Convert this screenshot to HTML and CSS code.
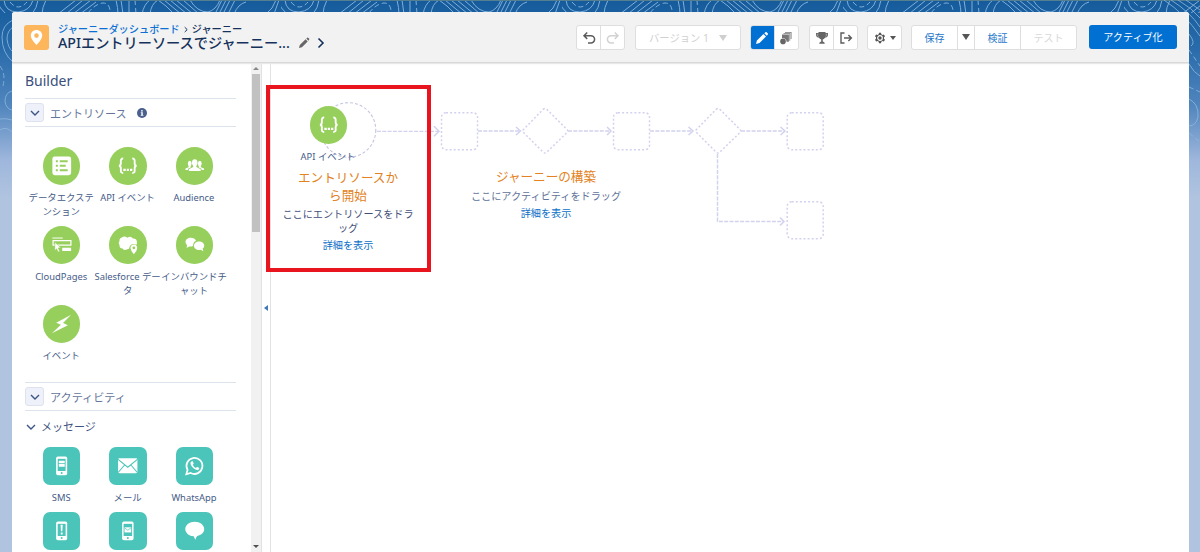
FILE: index.html
```
<!DOCTYPE html>
<html lang="ja">
<head>
<meta charset="utf-8">
<title>Journey Builder</title>
<link rel="stylesheet" href="styles.css">
</head>
<body>
<svg class="backdrop" width="1200" height="552" aria-hidden="true">
  <defs>
    <linearGradient id="sky" x1="0" y1="0" x2="0" y2="1">
      <stop offset="0" stop-color="#155b9b"/><stop offset=".09" stop-color="#2a6cab"/><stop offset=".19" stop-color="#5085bd"/><stop offset=".29" stop-color="#9eb7dc"/><stop offset=".36" stop-color="#b0c4df"/><stop offset="1" stop-color="#b0c4df"/>
    </linearGradient>
    <pattern id="topo" width="281" height="200" patternUnits="userSpaceOnUse">
      <g fill="none" stroke="#7fadd8" stroke-width="1">
        <path d="M4 0Q5 12 18 12Q30 11 33 0"/>
        <path d="M10 2Q18 12 27 2" stroke-dasharray="5 3"/>
        <path d="M-4 0Q0 9 6 14M38 0Q37 8 32 14M46 0Q42 8 42 14M58 14L76 0M66 14L83 0M73 14L91 0M80 14L96 2M116 0Q118 8 118 14M121 0L123 14M129 0L129 14M142 14Q144 4 150 0M150 14Q151 4 158 0M158 0Q166 5 174 14M164 0L181 14M170 0L187 14M176 0L193 14M183 0L199 14M190 0Q197 12 208 12Q216 10 220 0M215 14L222 0M219 14L226 0M223 14L230 0M228 14L235 0M234 14Q238 4 246 2M266 14Q273 9 276 0M274 14L279 0"/>
        <path d="M88 13Q95 4 103 3Q109 3 110 10M135 0L136 14M242 0L270 0" stroke-dasharray="5 3"/>
      </g>
    </pattern>
  </defs>
  <rect width="1200" height="552" fill="url(#sky)"/>
  <rect width="1200" height="13" fill="url(#topo)"/>
  <rect width="1200" height="1" fill="#537f91"/>
  <g fill="none" stroke="#8fb9df" stroke-width="1" opacity=".8">
    <path d="M13 20Q2 25 2 37Q2 53 13 62M13 27Q7 31 7 39Q8 48 13 52M12 91Q5 93 5 101Q6 109 12 110M0 119Q6 118 12 120M0 130Q6 126 12 132"/>
    <path d="M0 66Q6 74 3 86" stroke-dasharray="5 3"/>
    <path d="M1164 0Q1185 14 1200 36M1171 0Q1190 12 1200 27M1178 0Q1192 8 1200 18M1186 0L1200 10M1189 34Q1196 43 1191 46M1189 64Q1194 73 1200 76M1189 99Q1199 104 1198 117Q1196 126 1189 126"/>
    <path d="M1189 50L1200 66M1189 87L1200 92M1189 133L1200 142" stroke-dasharray="5 3"/>
  </g>
</svg>

<div class="app">
  <header class="topbar">
    <span class="app-icon"><svg width="25" height="25" viewBox="0 0 25 25"><path fill="#fff" fill-rule="evenodd" d="M12.5 5C9.2 5 6.8 7.4 6.8 10.5C6.8 14.5 12.5 20 12.5 20S18.2 14.5 18.2 10.5C18.2 7.4 15.8 5 12.5 5ZM12.5 8.3A2.3 2.3 0 1 1 12.5 12.9A2.3 2.3 0 1 1 12.5 8.3Z"/></svg></span>
    <div class="heading">
      <div class="crumbs"><a>ジャーニーダッシュボード</a><svg width="12" height="10" viewBox="0 0 12 10"><path d="M4.7 3.2L7.2 5.6L4.7 8" fill="none" stroke="#16325c" stroke-width="1"/></svg><span>ジャーニー</span></div>
      <div class="title-row">
        <h1>APIエントリーソースでジャーニー...</h1>
        <svg class="pencil" width="12" height="12" viewBox="0 0 12 12"><path fill="#666" d="M1 11L1.8 8.1L7.6 2.3L9.7 4.4L3.9 10.2ZM8.3 1.6L9.2 .7Q9.8 .3 10.4 .9L11.1 1.6Q11.6 2.2 11.1 2.8L10.4 3.7Z"/></svg>
        <svg class="next" width="8" height="12" viewBox="0 0 8 12"><path d="M1.5 1.5L6 6L1.5 10.5" fill="none" stroke="#16325c" stroke-width="1.6"/></svg>
      </div>
    </div>
    <div class="tools">
      <div class="group undo">
        <button><svg width="14" height="14" viewBox="0 0 14 14"><path d="M5.2 1.5L2 4.7L5.2 7.9M2.2 4.7H8.3A3.7 3.7 0 1 1 8.3 12H6" fill="none" stroke="#5c5c5c" stroke-width="1.5"/></svg></button>
        <button><svg width="14" height="14" viewBox="0 0 14 14"><path d="M8.8 1.5L12 4.7L8.8 7.9M11.8 4.7H5.7A3.7 3.7 0 1 0 5.7 12H8" fill="none" stroke="#d2d2d2" stroke-width="1.5"/></svg></button>
      </div>
      <div class="group version"><button><span>バージョン 1</span><i class="caret pale"></i></button></div>
      <div class="group modes">
        <button class="on"><svg width="14" height="14" viewBox="0 0 14 14"><path fill="#fff" d="M1 13L1.9 9.5L8.5 3L11 5.5L4.5 12.1ZM9.3 2.2L10.4 1.2Q11 .7 11.7 1.3L12.7 2.3Q13.3 3 12.8 3.6L11.8 4.7Z"/></svg></button>
        <button><svg width="14" height="14" viewBox="0 0 14 14"><path fill="#777" d="M6 1H12.5V8H11.7V1.8H6ZM4.5 2.3H11.2V9.7H10.4V3.1H4.5ZM3 3.6H9.9V10.8H7.6Q7.4 7.2 3 7Z"/><circle cx="4" cy="10.4" r="2.8" fill="#666"/></svg></button>
      </div>
      <div class="group extra">
        <button><svg width="14" height="14" viewBox="0 0 14 14"><path fill="#666" d="M3.5 1H10.5V2H13V4.2Q12.8 6.6 10 6.8Q9.3 8 7.8 8.4V10.5Q9.8 11 9.8 12.8H4.2Q4.2 11 6.2 10.5V8.4Q4.7 8 4 6.8Q1.2 6.6 1 4.2V2H3.5Z"/><path d="M3.4 3.2H2.2Q2.1 5 3.7 5.5M10.6 3.2H11.8Q11.9 5 10.3 5.5" fill="none" stroke="#bbb" stroke-width=".7"/></svg></button>
        <button><svg width="14" height="14" viewBox="0 0 14 14"><path d="M5.5 2H2V12H5.5M5 7H12.3M9.4 4L12.4 7L9.4 10" fill="none" stroke="#5c5c5c" stroke-width="1.4"/></svg></button>
      </div>
      <div class="group gear"><button><svg width="12" height="12" viewBox="0 0 12 12"><path fill="#555" d="M5 .8H7L7.3 2.2L8.5 2.9L9.9 2.4L11 4.2L10 5.2V6.8L11 7.8L9.9 9.6L8.5 9.1L7.3 9.8L7 11.2H5L4.7 9.8L3.5 9.1L2.1 9.6L1 7.8L2 6.8V5.2L1 4.2L2.1 2.4L3.5 2.9L4.7 2.2Z"/><circle cx="6" cy="6" r="2.3" fill="none" stroke="#fff" stroke-width="1.2"/></svg><i class="caret small"></i></button></div>
      <div class="group save"><button>保存</button><button><i class="caret"></i></button><button>検証</button><button class="off">テスト</button></div>
      <button class="activate">アクティブ化</button>
    </div>
  </header>

  <main class="body">
    <aside class="sidebar">
      <h2>Builder</h2>
      <div class="section">
        <span class="toggle"><svg width="10" height="6" viewBox="0 0 10 6"><path d="M1 1L5 5L9 1" fill="none" stroke="#3d5584" stroke-width="1.4"/></svg></span>
        <span>エントリソース</span>
        <svg class="info" width="10" height="10" viewBox="0 0 10 10"><circle cx="5" cy="5" r="5" fill="#4a618d"/><path d="M4 2.2H5.8V3.4H4ZM3.8 4.2H5.8V7H6.4V7.8H3.7V7H4.3V5H3.8Z" fill="#fff"/></svg>
      </div>
      <div class="grid sources">
        <div class="item"><span class="tile round"><svg viewBox="0 0 38 38"><rect x="9.5" y="9.5" width="19" height="19" rx="2.5" fill="#fff"/><path d="M13 14.5H15M13 19H15M13 23.5H15M17 14.5H25M17 19H23M17 23.5H25" stroke="#97cf5d" stroke-width="2"/></svg></span><p>データエクステ<br>ンション</p></div>
        <div class="item"><span class="tile round"><svg viewBox="0 0 38 38"><path d="M14.4 11.7Q12 11.6 12 14V16.5Q12 19 10 19Q12 19 12 21.5V24Q12 26.4 14.4 26.3M23.6 11.7Q26 11.6 26 14V16.5Q26 19 28 19Q26 19 26 21.5V24Q26 26.4 23.6 26.3" fill="none" stroke="#fff" stroke-width="1.9"/><path d="M14.5 22.1H17V24.3H14.5ZM18 22.1H20.3V24.3H18ZM21.3 22.1H23.6V24.3H21.3Z" fill="#fff"/></svg></span><p>API イベント</p></div>
        <div class="item"><span class="tile round"><svg viewBox="0 0 38 38"><g fill="#fff"><ellipse cx="19" cy="16" rx="2.8" ry="3.5"/><ellipse cx="13.9" cy="16.7" rx="1.9" ry="2.7"/><ellipse cx="24.1" cy="16.7" rx="1.9" ry="2.7"/><path d="M17.4 18H20.6V20.3L25 22.5V24.2H13V22.5L17.4 20.3ZM12.8 18.5H14.9V20.8L12.2 22V23.3H9.6V21.9L12.8 20.5ZM23.1 18.5H25.2V20.5L28.4 21.9V23.3H25.8V22L23.1 20.8Z"/></g></svg></span><p>Audience</p></div>
        <div class="item"><span class="tile round"><svg viewBox="0 0 38 38"><path d="M9.5 12.2H20" stroke="#fff"/><path d="M10.2 14.8H28.3V19.4H10.2Z" fill="none" stroke="#fff" stroke-width="1.2"/><path d="M19.5 22H28.5V25.3H19.5Z" fill="#fff"/><path d="M12 16.5L18 22L15.3 22.2L17 25.5L15.3 26.3L13.8 23.1L12 24.8Z" fill="#fff" stroke="#97cf5d" stroke-width=".5"/></svg></span><p>CloudPages</p></div>
        <div class="item"><span class="tile round"><svg viewBox="0 0 38 38"><path d="M13 11.6Q16 9.5 18.5 12Q22 9.6 24.3 12.7Q28.6 12.7 28.3 17Q28.4 18.2 27.8 19Q22.5 16.8 20.8 21.3Q20.8 23.8 18.5 23.6Q15.5 25.5 13.7 22.8Q10.3 22.6 10.7 19.5Q8.8 17.4 10.6 15.2Q10.4 12.3 13 11.6Z" fill="#fff"/><path fill="#fff" fill-rule="evenodd" d="M25.2 18.8Q21.9 18.9 21.8 22.3Q22 25.3 25.2 28.7Q28.4 25.3 28.6 22.3Q28.5 18.9 25.2 18.8ZM25.2 20.7A1.4 1.4 0 1 1 25.2 23.5A1.4 1.4 0 1 1 25.2 20.7Z"/></svg></span><p>Salesforce デー<br>タ</p></div>
        <div class="item"><span class="tile round"><svg viewBox="0 0 38 38"><path fill="#fff" d="M15 11.8C12 11.8 9.6 13.5 9.6 16.3Q9.7 18.4 11.3 19.6L10.7 22.2L13.3 20.7Q15.5 21.1 17.3 20.2Q17.2 16.3 20.3 14.9C19.5 12.9 17.6 11.8 15 11.8ZM23.4 15.7C20.3 15.7 18.2 17.7 18.2 20.1C18.2 23.5 21.8 25 25.1 24.1L27.7 25.6L27 22.9Q28.6 21.8 28.6 19.9C28.5 17.2 26 15.7 23.4 15.7Z"/></svg></span><p>インバウンドチ<br>ャット</p></div>
        <div class="item"><span class="tile round"><svg viewBox="0 0 38 38"><path fill="#fff" d="M28.5 10L13.4 18L18.2 20L9 28.7L25.3 20.4L20.3 18.2Z"/></svg></span><p>イベント</p></div>
      </div>
      <div class="section second">
        <span class="toggle"><svg width="10" height="6" viewBox="0 0 10 6"><path d="M1 1L5 5L9 1" fill="none" stroke="#3d5584" stroke-width="1.4"/></svg></span>
        <span>アクティビティ</span>
      </div>
      <div class="sub"><svg width="10" height="6" viewBox="0 0 10 6"><path d="M1 1L5 5L9 1" fill="none" stroke="#3d5584" stroke-width="1.4"/></svg><span>メッセージ</span></div>
      <div class="grid messages">
        <div class="item"><span class="tile"><svg viewBox="0 0 38 38"><rect x="13.3" y="9.6" width="11.2" height="19" rx="1.8" fill="#fff"/><path d="M14.9 12H22.9V24.3H14.9Z" fill="#4bc4b9"/><path d="M16 14H22V16.4H16ZM16 17.3H22V20H16Z" fill="#fff"/><circle cx="18.9" cy="26.4" r="1" fill="#4bc4b9"/></svg></span><p>SMS</p></div>
        <div class="item"><span class="tile"><svg viewBox="0 0 38 38"><rect x="9.2" y="11.5" width="19.6" height="15" rx="1.5" fill="#fff"/><path d="M9.2 12.5L19 20.5L28.8 12.5M9.5 25.6L16 18M28.5 25.6L22 18" fill="none" stroke="#4bc4b9" stroke-width="1.1"/></svg></span><p>メール</p></div>
        <div class="item"><span class="tile"><svg viewBox="0 0 38 38"><path d="M10.5 27.6L11.7 23.3A8.1 8.1 0 1 1 14.8 26.3Z" fill="none" stroke="#fff" stroke-width="1.8"/><path d="M16 14.5Q14.4 15.3 14.7 17.3Q16.6 22.5 21.7 23.5Q23.5 23.4 23.7 21.3L21.4 19.9L20.2 21.2Q17.8 20.2 17 18L18 16.9L17 14.5Z" fill="#fff"/></svg></span><p>WhatsApp</p></div>
        <div class="item"><span class="tile"><svg viewBox="0 0 38 38"><rect x="13.3" y="9.6" width="11.2" height="19" rx="1.8" fill="#fff"/><path d="M14.9 12H22.9V24.3H14.9Z" fill="#4bc4b9"/><path d="M17.8 13H20L19.6 19.5H18.2ZM18 20.7H19.9V22.7H18Z" fill="#fff"/><circle cx="18.9" cy="26.4" r="1" fill="#4bc4b9"/></svg></span></div>
        <div class="item"><span class="tile"><svg viewBox="0 0 38 38"><rect x="13.3" y="9.6" width="11.6" height="19" rx="1.8" fill="#fff"/><path d="M14.8 12H23.4V24.3H14.8Z" fill="#4bc4b9"/><path d="M15.7 15.5H22.5V20.7H15.7Z" fill="#fff"/><path d="M15.7 15.9L19.1 18.5L22.5 15.9" stroke="#4bc4b9" stroke-width=".7" fill="none"/><circle cx="19.1" cy="26.4" r="1" fill="#4bc4b9"/></svg></span></div>
        <div class="item"><span class="tile"><svg viewBox="0 0 38 38"><path fill="#fff" d="M19 9.8C13.7 9.8 9.4 13 9.4 17.2C9.4 21.4 13.7 24.6 18 24.5Q18.5 26.5 19.7 28Q20 25.6 21.5 24.2C25.7 23.3 28.6 20.7 28.6 17.2C28.6 13 24.3 9.8 19 9.8Z"/></svg></span></div>
      </div>
    </aside>
    <div class="scrollbar"><i class="up"></i><i class="thumb"></i><i class="down"></i></div>
    <div class="splitter"><i></i></div>
    <section class="canvas">
      <svg class="flow" width="580" height="190" viewBox="260 62 580 190" fill="none" stroke="#d2d2ee" stroke-width="1.5">
        <circle cx="348.5" cy="130" r="27.3" stroke-width="1.1" stroke="#c4c5df" stroke-dasharray="3 2"/>
        <g stroke-dasharray="2 2.1"><rect x="441.5" y="112.7" width="36" height="37" rx="4.5"/><rect x="613.5" y="112.7" width="36" height="37" rx="4.5"/><rect x="787.2" y="112.7" width="36" height="37" rx="4.5"/><rect x="787.2" y="201.7" width="36" height="37" rx="4.5"/>
        <path d="M543 109.5Q545 107.5 547 109.5L567 129.5Q568.5 131 567 132.5L547 152Q545 154 543 152L523.5 132.5Q522 131 523.5 129.5ZM716 109.5Q718 107.5 720 109.5L740 129.5Q741.5 131 740 132.5L720 152Q718 154 716 152L696.5 132.5Q695 131 696.5 129.5Z"/></g>
        <g stroke-dasharray="4 1.3"><path d="M377 131.3H438" stroke-width="1.2"/><path d="M478 131H520M568 131H611M650 131H693M741 131H784M717.5 154V221.5H783"/></g>
        <path d="M434 126.3L439 131.3L434 136.3M516 127L520.5 131L516 135M607 127L611 131L607 135M688.5 127L693 131L688.5 135M780.5 127L785 131L780.5 135M780 217.5L784 221.5L780 225.5"/>
      </svg>
      <div class="dragged"><span class="tile round"><svg viewBox="0 0 38 38"><path d="M14.4 11.7Q12 11.6 12 14V16.5Q12 19 10 19Q12 19 12 21.5V24Q12 26.4 14.4 26.3M23.6 11.7Q26 11.6 26 14V16.5Q26 19 28 19Q26 19 26 21.5V24Q26 26.4 23.6 26.3" fill="none" stroke="#fff" stroke-width="1.9"/><path d="M14.5 22.1H17V24.3H14.5ZM18 22.1H20.3V24.3H18ZM21.3 22.1H23.6V24.3H21.3Z" fill="#fff"/></svg></span><p>API イベント</p></div>
      <div class="hint start"><h3>エントリソースか<br>ら開始</h3><p>ここにエントリソースをドラ<br>ッグ</p><a>詳細を表示</a></div>
      <div class="hint build"><h3>ジャーニーの構築</h3><p>ここにアクティビティをドラッグ</p><a>詳細を表示</a></div>
    </section>
  </main>
</div>
<div class="highlight"></div>
</body>
</html>
```

FILE: styles.css
```
* { box-sizing: border-box; }
body { margin: 0; width: 1200px; height: 552px; overflow: hidden; padding: 12px 11px 0 12px; font-family: "Noto Sans", "Noto Sans CJK JP", sans-serif; color: #54698d; }
h1, h2, h3, p { margin: 0; font-weight: 400; white-space: nowrap; }
svg { display: block; flex: none; }
button { border: 0; padding: 0; background: none; font: inherit; color: inherit; display: flex; align-items: center; justify-content: center; white-space: nowrap; }
.backdrop { position: absolute; left: 0; top: 0; }
.app { position: relative; height: 540px; background: #fff; border-radius: 3px 3px 0 0; overflow: hidden; display: flex; flex-direction: column; }

.topbar { height: 51px; flex: none; background: #f2f2f2; border-bottom: 1px solid #d8d8d8; box-shadow: 0 1px 1px #e8e8e8; display: flex; padding: 13px 12px 0; z-index: 1; }
.app-icon { width: 25px; height: 25px; border-radius: 3px; background: #fdb65c; flex: none; }
.heading { margin-left: 9px; width: 330px; margin-top: -3px; }
.crumbs { display: flex; align-items: center; height: 13px; line-height: 13px; font-size: 10.2px; font-weight: 500; font-family: "Noto Sans CJK JP", sans-serif; color: #16325c; }
.crumbs a { color: #0b70d2; }
.title-row { display: flex; height: 16px; line-height: 16px; align-items: center; }
.title-row h1 { font-size: 14.2px; font-weight: 500; color: #16325c; width: 234px; }
.pencil { margin: 0 0 0 6px; }
.next { margin-left: 7px; }
.tools { margin-left: auto; display: flex; font-size: 10px; height: 24px; }
.group { display: flex; background: #fff; border: 1px solid #dedede; border-radius: 3px; height: 25px; overflow: hidden; }
.group button + button { border-left: 1px solid #dedede; }
.undo { width: 49px; margin-right: 10px; }
.undo button, .modes button, .extra button { flex: 1; }
.version { width: 106px; margin-right: 9px; color: #d0d0d0; }
.version button { width: 100%; gap: 10px; font-size: 10.3px; }
.modes { width: 49px; margin-right: 10px; }
.modes .on { background: #0070d2; margin: -1px 0 -1px -1px; }
.extra { width: 49px; margin-right: 9px; }
.gear { width: 35px; margin-right: 9px; }
.gear button { width: 100%; gap: 4px; }
.save { width: 166px; margin-right: 12px; color: #2476c9; }
.save button { padding-bottom: 1px; }
.save button:nth-child(1) { width: 45px; }
.save button:nth-child(2) { width: 17px; }
.save button:nth-child(3) { width: 46px; }
.save button:nth-child(4) { flex: 1; }
.save .off { color: #d8d8d8; }
.activate { width: 88px; height: 24px; padding-bottom: 1px; border-radius: 3px; background: #0070d2; color: #fff; font-size: 10.1px; }
.caret { border: 4.5px solid transparent; border-top: 6px solid #555; border-bottom: 0; }
.caret.pale { border-top-color: #cfcfcf; }
.caret.small { border-width: 4px 3px 0; }

.body { flex: 1; display: flex; min-height: 0; }
.sidebar { width: 239px; padding: 0 15px 0 13px; overflow: hidden; flex: none; }
.sidebar h2 { font-size: 14px; line-height: 20px; color: #3a4f7c; margin-top: 8px; height: 27px; }
.section { width: 211px; height: 29px; border: solid #dde3ec; border-width: 1px 0; display: flex; align-items: center; font-size: 11px; color: #64759a; }
.section.second { font-size: 11.1px; }
.toggle { width: 19px; height: 19px; background: #eef1fa; border: 1px solid #dde2ee; border-radius: 3px; display: flex; align-items: center; justify-content: center; margin-right: 6px; }
.info { margin-left: 11px; }
.grid { display: grid; grid-template-columns: repeat(3, 66.4px); margin-left: 3px; }
.sources { grid-auto-rows: 79px; margin-top: 20px; height: 235px; }
.messages { grid-auto-rows: 65.3px; margin-top: 12px; }
.item { display: flex; flex-direction: column; align-items: center; }
.tile { width: 37.5px; height: 37.5px; border-radius: 7px; background: #4bc4b9; flex: none; margin-left: 1px; }
.tile svg { width: 100%; height: 100%; }
.tile.round { border-radius: 50%; background: #97cf5d; }
.item p, .dragged p { font-size: 9.4px; line-height: 14px; text-align: center; margin-top: 6px; color: #465c89; }
.sub { display: flex; align-items: center; gap: 5px; font-size: 11px; line-height: 16px; margin-top: 8px; color: #3f547f; padding-left: 1px; }

.scrollbar { width: 10px; background: #f1f1f1; display: flex; flex-direction: column; align-items: center; flex: none; }
.scrollbar .up { border: 3px solid transparent; border-bottom: 3px solid #888; border-top: 0; margin: 4px 0; }
.scrollbar .thumb { width: 8px; height: 158px; background: #c1c1c1; }
.scrollbar .down { border: 3px solid transparent; border-top: 3px solid #505050; border-bottom: 0; margin: auto 0 4px; }
.splitter { width: 10px; border: solid #e0e2e6; border-width: 0 1px; display: flex; align-items: center; justify-content: center; flex: none; }
.splitter i { border: 3px solid transparent; border-right: 4px solid #3f79b8; border-left: 0; }

.canvas { position: relative; flex: 1; }
.flow { position: absolute; left: -11px; top: -1px; }
.dragged { position: absolute; left: 22px; top: 43px; width: 70px; display: flex; flex-direction: column; align-items: center; }
.hint { position: absolute; text-align: center; line-height: 14px; font-size: 10.15px; }
.hint h3 { font-size: 12.6px; line-height: 17.5px; color: #e28222; margin-bottom: 3px; }
.hint a { display: block; color: #0b6fc9; line-height: 18px; margin-top: 1px; }
.start { left: 7px; top: 106px; width: 140px; color: #3f4f78; }
.build { left: 185px; top: 105px; width: 180px; color: #61729a; }
.highlight { position: absolute; left: 266px; top: 85px; width: 165px; height: 187px; border: 4px solid #e8151f; }
```
